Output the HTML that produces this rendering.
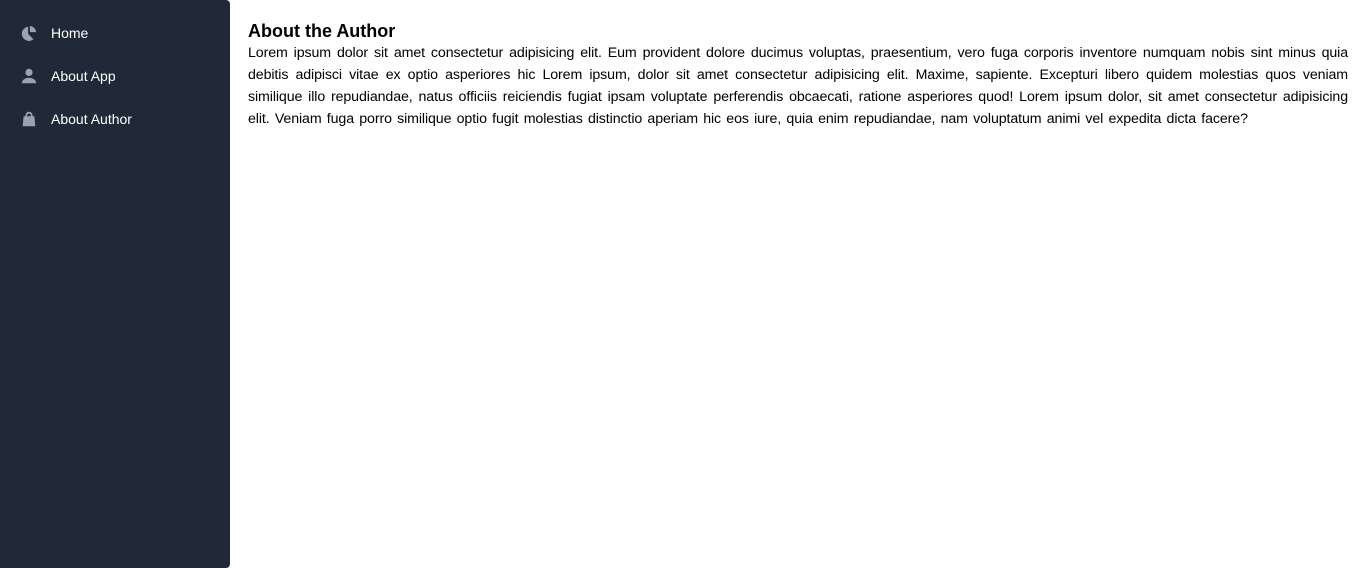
<!DOCTYPE html>
<html><head><style>
body{margin:0;width:1366px;height:568px;background:#fff;font-family:"Liberation Sans",sans-serif;overflow:hidden}
.side{position:absolute;left:0;top:0;width:230px;height:568px;background:#1f2937;border-radius:0 4px 4px 0}
.item{position:absolute;left:20px;height:20px;display:flex;align-items:center;color:#fff;font-size:14px}
.item svg{width:18px;height:18px;margin-right:13px}
.main{position:absolute;left:248px;top:20px;width:1100px}
h1{margin:0;font-size:18px;font-weight:bold;color:#000;line-height:22px}
.l{font-size:14.2px;letter-spacing:-0.1px;line-height:22px;color:#000;text-align:justify;text-align-last:justify;white-space:nowrap;height:22px;overflow:visible}
.l.last{text-align-last:left;word-spacing:1.4px}
</style></head><body>
<div class="side">
<div class="item" style="top:23px"><svg viewBox="0 0 20 20" fill="#9ca3af"><path d="M2 11a8 8 0 0 1 7-8v8l6 6a8 8 0 0 1-13-6z"/><path d="M11 2.1A8 8 0 0 1 18 9h-7z"/></svg>Home</div>
<div class="item" style="top:66px"><svg viewBox="0 0 20 20" fill="#9ca3af"><circle cx="10" cy="6" r="4"/><path d="M2 18a8 6 0 0 1 16 0z"/></svg>About App</div>
<div class="item" style="top:109px"><svg viewBox="0 0 20 20" fill="#9ca3af"><path d="M6 7V6a4 4 0 0 1 8 0v1h2l1 11H3L4 7zm2 0h4V6a2 2 0 0 0-4 0z"/></svg>About Author</div>
</div>
<div class="main">
<h1>About the Author</h1>
<div class="l">Lorem ipsum dolor sit amet consectetur adipisicing elit. Eum provident dolore ducimus voluptas, praesentium, vero fuga corporis inventore numquam nobis sint minus quia</div>
<div class="l">debitis adipisci vitae ex optio asperiores hic Lorem ipsum, dolor sit amet consectetur adipisicing elit. Maxime, sapiente. Excepturi libero quidem molestias quos veniam</div>
<div class="l">similique illo repudiandae, natus officiis reiciendis fugiat ipsam voluptate perferendis obcaecati, ratione asperiores quod! Lorem ipsum dolor, sit amet consectetur adipisicing</div>
<div class="l last">elit. Veniam fuga porro similique optio fugit molestias distinctio aperiam hic eos iure, quia enim repudiandae, nam voluptatum animi vel expedita dicta facere?</div>
</div>
</body></html>
